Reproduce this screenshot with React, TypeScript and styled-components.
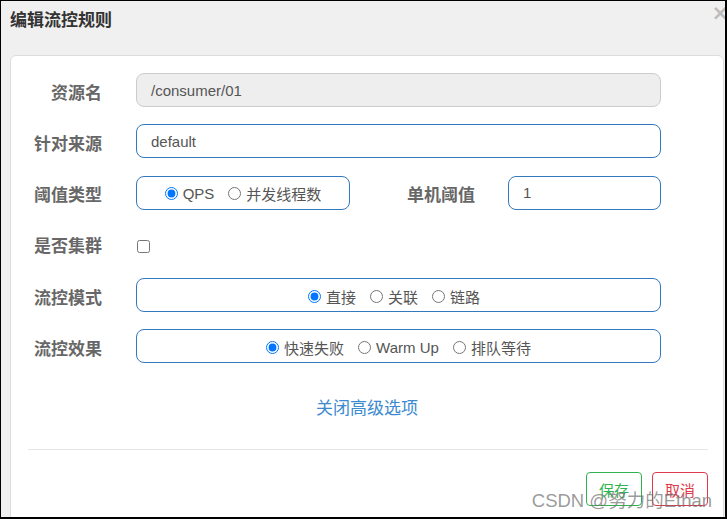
import React from "react";
import styled, { createGlobalStyle } from "styled-components";

const Global = createGlobalStyle`
  html, body { margin: 0; padding: 0; background: #fff; }
  body { font-family: "Liberation Sans", "Noto Sans CJK SC", sans-serif; }
  * { box-sizing: border-box; }
`;

const Frame = styled.div`
  position: relative;
  width: 727px;
  height: 519px;
  overflow: hidden;
  border: 1px solid #000;
  border-right-width: 2px;
  border-bottom-width: 2px;
  background: #f0f0f0;
  display: flex;
  flex-direction: column;
`;

const Header = styled.div`
  height: 54px;
  flex: none;
  display: flex;
  justify-content: space-between;
  align-items: flex-start;
  padding: 10px 0 0 9px;
`;

const Title = styled.h4`
  margin: 0;
  font-size: 17px;
  line-height: 20px;
  font-weight: bold;
  color: #333;
`;

const Close = styled.span`
  font-family: "DejaVu Sans", sans-serif;
  font-size: 21px;
  line-height: 1;
  font-weight: bold;
  color: #bdbdbd;
  margin-top: -8px;
  margin-right: -4px;
`;

const Panel = styled.div`
  flex: none;
  margin: 0 1px 0 9px;
  height: 600px;
  background: #fff;
  border: 1px solid #dcdcdc;
  border-radius: 6px 6px 0 0;
  padding-top: 17px;
`;

const Form = styled.div`
  display: grid;
  grid-template-columns: 91px 525px;
  column-gap: 34px;
  row-gap: 17.3px;
`;

const Label = styled.div`
  height: 34px;
  display: flex;
  align-items: center;
  justify-content: flex-end;
  font-size: 17px;
  font-weight: bold;
  color: #676767;
  white-space: nowrap;
  padding-top: 2px;
`;

const TextInput = styled.div<{ $disabled?: boolean; $width?: number }>`
  height: 34px;
  width: ${(p) => (p.$width ? `${p.$width}px` : "100%")};
  display: flex;
  align-items: center;
  padding: 0 14px;
  border: 1px solid ${(p) => (p.$disabled ? "#cccccc" : "#3279be")};
  background: ${(p) => (p.$disabled ? "#eeeeee" : "#fff")};
  border-radius: 8px;
  font-size: 15px;
  color: #555;
  flex: none;
`;

const RadioBox = styled.div<{ $width?: number; $shift?: number }>`
  height: 34px;
  width: ${(p) => (p.$width ? `${p.$width}px` : "100%")};
  flex: none;
  display: flex;
  align-items: center;
  justify-content: center;
  gap: 14px;
  padding-right: ${(p) => p.$shift ?? 0}px;
  padding-top: 2px;
  border: 1px solid #3279be;
  border-radius: 8px;
  font-size: 15px;
  color: #555;
`;

const Option = styled.label`
  display: flex;
  align-items: center;
  gap: 5px;
  white-space: nowrap;
  input {
    margin: 0;
    width: 13px;
    height: 13px;
    accent-color: #0075ff;
  }
`;

const SplitRow = styled.div`
  display: flex;
  align-items: center;
`;

const InlineLabel = styled(Label)`
  flex: 1;
  margin-right: 33px;
`;

const CheckCell = styled.div`
  height: 34px;
  display: flex;
  align-items: center;
  padding-left: 1px;
  padding-top: 6px;
  input {
    margin: 0;
    width: 13px;
    height: 13px;
  }
`;

const LinkRow = styled.div`
  margin-top: 36px;
  display: flex;
  justify-content: center;
`;

const Link = styled.a`
  font-size: 17px;
  line-height: 20px;
  color: #3c8ad0;
  text-decoration: none;
`;

const Divider = styled.hr`
  margin: 30px 15px 0 17px;
  border: 0;
  border-top: 1px solid #e5e5e5;
`;

const Footer = styled.div`
  display: flex;
  justify-content: flex-end;
  gap: 10px;
  margin: 22px 15px 0 0;
`;

const Button = styled.button<{ $tone: "green" | "red" }>`
  width: 56px;
  height: 34px;
  border-radius: 4px;
  background: #fff;
  font-family: "Liberation Sans", "Noto Sans CJK SC", sans-serif;
  font-size: 15px;
  padding: 0;
  border: 1px solid ${(p) => (p.$tone === "green" ? "#2fb34f" : "#e0394b")};
  color: ${(p) => (p.$tone === "green" ? "#2fb34f" : "#e0394b")};
`;

const Watermark = styled.div`
  position: absolute;
  right: 13px;
  bottom: 5px;
  font-size: 18.5px;
  color: rgba(110, 110, 110, 0.7);
  white-space: nowrap;
  pointer-events: none;
`;

function Radio({ name, label, checked }: { name: string; label: string; checked?: boolean }) {
  return (
    <Option>
      <input type="radio" name={name} defaultChecked={checked} />
      {label}
    </Option>
  );
}

export default function App() {
  return (
    <>
      <Global />
      <Frame>
        <Header>
          <Title>编辑流控规则</Title>
          <Close>×</Close>
        </Header>
        <Panel>
          <Form>
            <Label>资源名</Label>
            <TextInput $disabled>/consumer/01</TextInput>

            <Label>针对来源</Label>
            <TextInput>default</TextInput>

            <Label>阈值类型</Label>
            <SplitRow>
              <RadioBox $width={214}>
                <Radio name="grade" label="QPS" checked />
                <Radio name="grade" label="并发线程数" />
              </RadioBox>
              <InlineLabel>单机阈值</InlineLabel>
              <TextInput $width={153}>1</TextInput>
            </SplitRow>

            <Label>是否集群</Label>
            <CheckCell>
              <input type="checkbox" />
            </CheckCell>

            <Label>流控模式</Label>
            <RadioBox $shift={9}>
              <Radio name="strategy" label="直接" checked />
              <Radio name="strategy" label="关联" />
              <Radio name="strategy" label="链路" />
            </RadioBox>

            <Label>流控效果</Label>
            <RadioBox>
              <Radio name="behavior" label="快速失败" checked />
              <Radio name="behavior" label="Warm Up" />
              <Radio name="behavior" label="排队等待" />
            </RadioBox>
          </Form>
          <LinkRow>
            <Link href="#">关闭高级选项</Link>
          </LinkRow>
          <Divider />
          <Footer>
            <Button $tone="green">保存</Button>
            <Button $tone="red">取消</Button>
          </Footer>
        </Panel>
        <Watermark>CSDN @努力的Ethan</Watermark>
      </Frame>
    </>
  );
}
